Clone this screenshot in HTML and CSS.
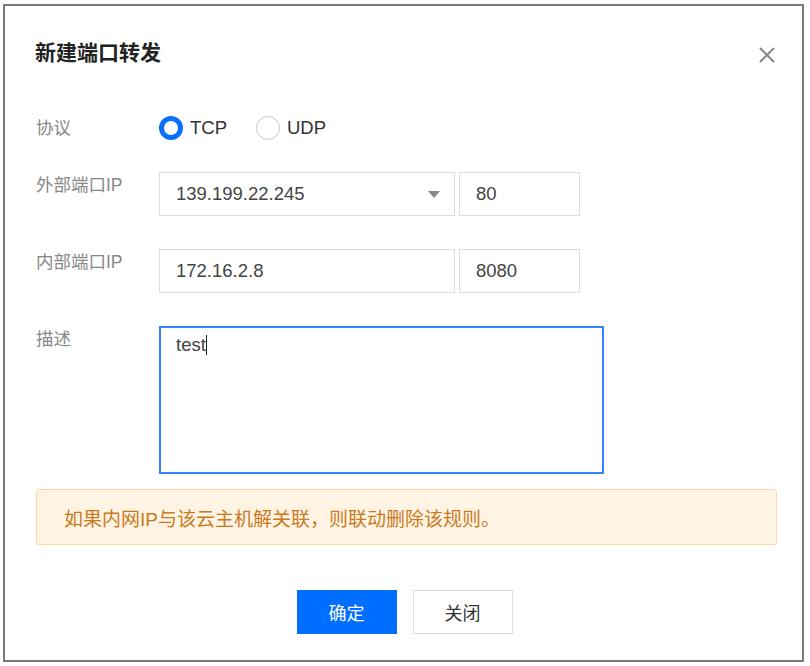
FILE: index.html
```html
<!DOCTYPE html>
<html lang="zh-CN">
<head>
<meta charset="utf-8">
<title>新建端口转发</title>
<link rel="stylesheet" href="styles.css">
</head>
<body>
<div class="dialog">
  <div class="dialog-header">
    <h1 class="dialog-title">新建端口转发</h1>
    <span class="close" aria-label="关闭">
      <svg width="18" height="18" viewBox="0 0 18 18"><path d="M2 2 L16 16 M16 2 L2 16" stroke="#888" stroke-width="2" fill="none"/></svg>
    </span>
  </div>
  <div class="form">
    <div class="row row-center">
      <div class="label">协议</div>
      <div class="radios">
        <label class="radio"><span class="dot checked"></span><span>TCP</span></label>
        <label class="radio"><span class="dot"></span><span>UDP</span></label>
      </div>
    </div>
    <div class="row">
      <div class="label">外部端口IP</div>
      <div class="controls">
        <div class="field select">
          <span>139.199.22.245</span>
          <svg class="caret" width="12" height="7" viewBox="0 0 12 7"><path d="M0 0 H12 L6 7 Z" fill="#888"/></svg>
        </div>
        <div class="field port">80</div>
      </div>
    </div>
    <div class="row">
      <div class="label">内部端口IP</div>
      <div class="controls">
        <div class="field wide">172.16.2.8</div>
        <div class="field port">8080</div>
      </div>
    </div>
    <div class="row row-last">
      <div class="label">描述</div>
      <div class="textarea">test<span class="cursor"></span></div>
    </div>
    <div class="alert">如果内网IP与该云主机解关联，则联动删除该规则。</div>
  </div>
  <div class="footer">
    <button class="btn primary">确定</button>
    <button class="btn">关闭</button>
  </div>
</div>
</body>
</html>
```
FILE: styles.css
```css
* { box-sizing: border-box; }
html, body { margin: 0; background: #fff; }
body {
  padding: 4px 6px 4px 3px;
  font-family: "Liberation Sans", "Noto Sans CJK SC", Arial, sans-serif;
  color: #333;
}
.dialog {
  border: 2px solid #7a7a7a;
  height: 658px;
  display: flex;
  flex-direction: column;
}
.dialog-header {
  display: flex;
  align-items: center;
  justify-content: space-between;
  padding: 33px 26px 0 30px;
  height: 60px;
}
.dialog-title {
  margin: 0;
  font-size: 21px;
  line-height: 28px;
  font-weight: bold;
  color: #222;
}
.close { display: flex; margin-top: 4px; }
.form {
  padding: 50px 0 0 31px;
  display: flex;
  flex-direction: column;
}
.row {
  display: flex;
  align-items: flex-start;
  margin-bottom: 33px;
}
.row-center { align-items: center; margin-bottom: 32px; height: 24px; }
.row-last { margin-bottom: 15px; }
.label {
  width: 123px;
  font-size: 17.5px;
  line-height: 26px;
  color: #888;
  flex: none;
}
.radios { display: flex; gap: 29px; }
.radio {
  display: flex;
  align-items: center;
  gap: 7px;
  font-size: 18.5px;
  color: #333;
}
.dot {
  width: 24px;
  height: 24px;
  border-radius: 50%;
  border: 1px solid #c8c8c8;
  background: #fff;
}
.dot.checked { border: 5.5px solid #0a6eff; }
.controls { display: flex; gap: 4px; }
.field {
  height: 44px;
  border: 1px solid #dcdcdc;
  display: flex;
  align-items: center;
  padding: 0 16px;
  font-size: 18.5px;
  color: #444;
}
.select { width: 296px; justify-content: space-between; padding-right: 14px; }
.wide { width: 296px; }
.port { width: 121px; }
.textarea {
  width: 445px;
  height: 148px;
  border: 2px solid #3385ff;
  padding: 5px 15px;
  font-size: 18.5px;
  line-height: 24px;
  color: #444;
}
.cursor {
  display: inline-block;
  width: 1px;
  height: 20px;
  background: #222;
  vertical-align: -4px;
}
.alert {
  width: 741px;
  height: 56px;
  background: #fff3e3;
  border: 1px solid #ffd6a0;
  border-radius: 3px;
  color: #c97a1e;
  font-size: 19px;
  display: flex;
  align-items: center;
  padding-left: 27px;
}
.footer {
  display: flex;
  justify-content: center;
  gap: 16px;
  margin-top: 45px;
  padding-left: 2px;
}
.btn {
  width: 100px;
  height: 44px;
  border: 1px solid #dcdcdc;
  background: #fff;
  font-family: inherit;
  font-size: 18px;
  color: #333;
}
.btn.primary {
  background: #006eff;
  border-color: #006eff;
  color: #fff;
}
```
